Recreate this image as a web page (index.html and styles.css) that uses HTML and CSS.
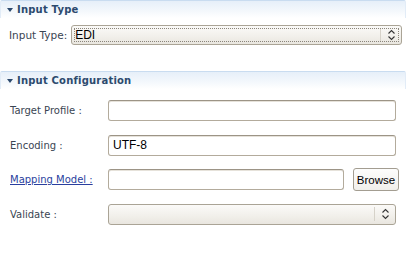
FILE: index.html
```html
<!DOCTYPE html>
<html>
<head>
<meta charset="utf-8">
<link rel="stylesheet" href="styles.css">
</head>
<body>
<div class="page">
  <section class="section">
    <div class="sec-head"><span class="twisty"></span><span class="sec-title">Input Type</span></div>
    <div class="type-row">
      <span class="label">Input Type:</span>
      <div class="combo focused">
        <span class="combo-text">EDI</span>
        <span class="combo-btn"><svg width="9" height="12" viewBox="0 0 9 12"><path d="M1.5 4.5 L4.5 1.5 L7.5 4.5 M1.5 7.5 L4.5 10.5 L7.5 7.5" fill="none" stroke="#333" stroke-width="1.1"/></svg></span>
      </div>
    </div>
  </section>
  <section class="section second">
    <div class="sec-head"><span class="twisty"></span><span class="sec-title">Input Configuration</span></div>
    <div class="form">
      <div class="frow">
        <span class="label wide">Target Profile :</span>
        <div class="entry"></div>
      </div>
      <div class="frow">
        <span class="label wide">Encoding :</span>
        <div class="entry"><span class="entry-text">UTF-8</span></div>
      </div>
      <div class="frow">
        <span class="label wide link">Mapping Model :</span>
        <div class="entry short"></div>
        <div class="button">Browse</div>
      </div>
      <div class="frow">
        <span class="label wide">Validate :</span>
        <div class="combo full">
          <span class="combo-text"></span>
          <span class="combo-btn"><svg width="9" height="12" viewBox="0 0 9 12"><path d="M1.5 4.5 L4.5 1.5 L7.5 4.5 M1.5 7.5 L4.5 10.5 L7.5 7.5" fill="none" stroke="#333" stroke-width="1.1"/></svg></span>
        </div>
      </div>
    </div>
  </section>
</div>
</body>
</html>
```

FILE: styles.css
```css
html, body {
  margin: 0;
  padding: 0;
  background: #ffffff;
}
.page {
  width: 409px;
  height: 262px;
  font-family: "DejaVu Sans", sans-serif;
  font-size: 10px;
  color: #3a4552;
}
.section {
  display: flex;
  flex-direction: column;
}
.second {
  margin-top: 26px;
}
.sec-head {
  height: 18px;
  width: 406px;
  box-sizing: border-box;
  border-top: 1px solid #c9dcf0;
  border-left: 1px solid #e2ecf7;
  border-right: 1px solid #e2ecf7;
  border-radius: 2px 2px 0 0;
  background: linear-gradient(to bottom, #e6eff9 0%, #f4f8fc 60%, #ffffff 100%);
  display: flex;
  align-items: center;
  padding-left: 6px;
  gap: 4px;
}
.twisty {
  width: 0;
  height: 0;
  border-left: 3.5px solid transparent;
  border-right: 3.5px solid transparent;
  border-top: 4px solid #2c4a6e;
  margin-top: 1px;
}
.sec-title {
  font-weight: bold;
  font-size: 10px;
  color: #2c4a6e;
  letter-spacing: 0.2px;
}
.type-row {
  display: flex;
  align-items: center;
  padding-left: 9px;
  margin-top: 7px;
  gap: 4px;
}
.label {
  white-space: nowrap;
}
.type-row .label {
  font-size: 10.5px;
}
.combo {
  box-sizing: border-box;
  height: 20px;
  width: 331px;
  border: 1px solid #aaa496;
  border-radius: 3px;
  background: linear-gradient(to bottom, #fbfaf8 0%, #f1efea 60%, #e9e6df 100%);
  display: flex;
  align-items: center;
  position: relative;
}
.combo.focused::after {
  content: "";
  position: absolute;
  left: 2px;
  top: 2px;
  right: 2px;
  bottom: 2px;
  border: 1px dotted #8a857b;
  pointer-events: none;
}
.combo-text {
  flex: 1;
  padding-left: 3px;
  font-family: "Liberation Sans", sans-serif;
  font-size: 12px;
  color: #000;
}
.combo-btn {
  width: 20px;
  height: 14px;
  border-left: 1px solid #d6d2c9;
  display: flex;
  align-items: center;
  justify-content: center;
}
.form {
  display: flex;
  flex-direction: column;
  padding-left: 10px;
  margin-top: 11px;
  gap: 13.5px;
}
.frow {
  display: flex;
  align-items: center;
  height: 21px;
}
.label.wide {
  width: 98px;
}
.link {
  color: #2a3f9e;
  text-decoration: underline;
}
.entry {
  box-sizing: border-box;
  width: 288px;
  height: 21px;
  border: 1px solid #b3ab9c;
  border-top-color: #9c9486;
  border-radius: 3px;
  background: #ffffff;
  box-shadow: inset 0 1px 0 #e6e2da;
  display: flex;
  align-items: center;
}
.entry.short {
  width: 236px;
}
.entry-text {
  padding-left: 4px;
  font-family: "Liberation Sans", sans-serif;
  font-size: 12px;
  color: #000;
}
.button {
  box-sizing: border-box;
  margin-left: 9px;
  width: 46px;
  height: 23px;
  border: 1px solid #a39d91;
  border-radius: 3px;
  background: linear-gradient(to bottom, #fdfdfc 0%, #f1efeb 100%);
  font-family: "Liberation Sans", sans-serif;
  font-size: 11.5px;
  color: #000;
  display: flex;
  align-items: center;
  justify-content: center;
}
.combo.full {
  width: 288px;
  height: 21px;
}
```
